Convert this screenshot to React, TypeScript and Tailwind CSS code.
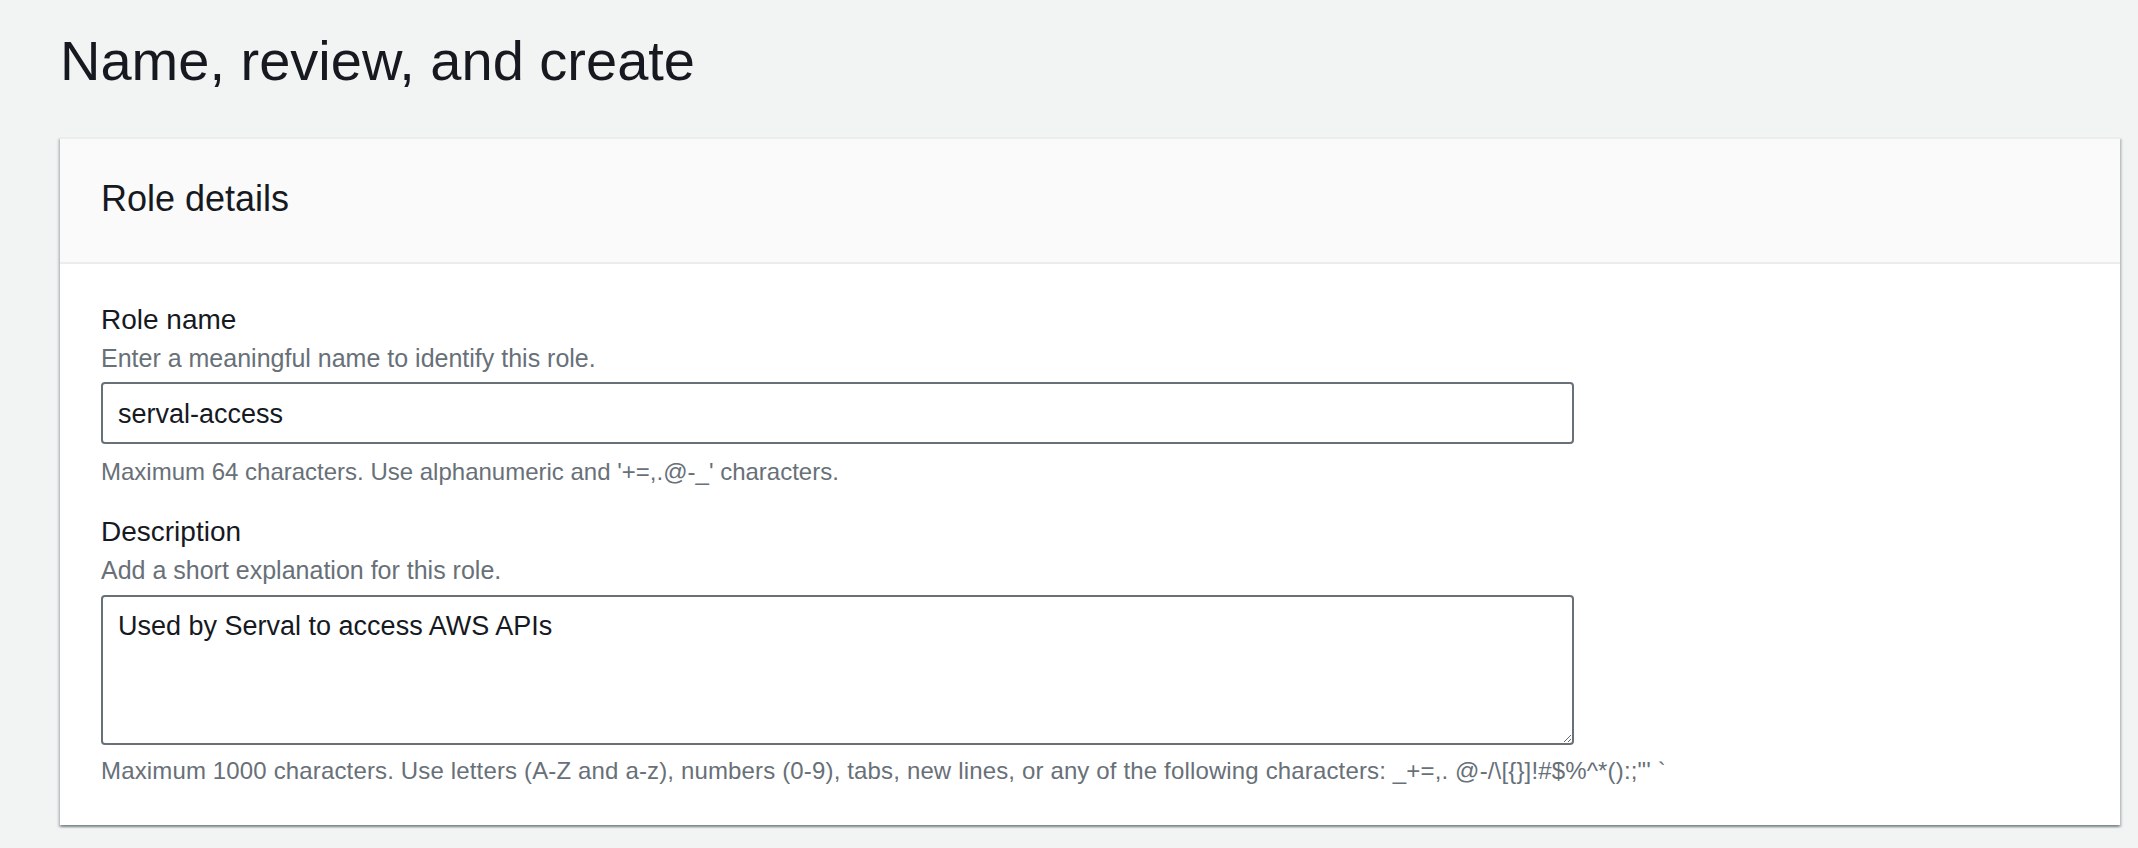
export default function App() {
  return (
    <div className="min-h-[848px] bg-[#f2f3f3] pl-[60px] pr-[18px] pt-[25px] pb-[22px] font-['Liberation_Sans',Arial,sans-serif] text-[#16191f]">
      <h1 className="text-[56px] leading-[72px] font-normal">Name, review, and create</h1>

      <div className="mt-[40px] bg-white border-t-2 border-[#eaeded] shadow-[0_2px_2px_0_rgba(0,28,36,0.3),2px_2px_2px_0_rgba(0,28,36,0.15),-2px_2px_2px_0_rgba(0,28,36,0.15)]">
        {/* Header */}
        <div className="bg-[#fafafa] border-b-2 border-[#eaeded] px-[41px] pt-[36px] pb-[39px]">
          <h2 className="text-[36px] leading-[48px] font-normal">Role details</h2>
        </div>

        {/* Body */}
        <div className="px-[41px] pt-[36px] pb-[38px]">
          <div>
            <label className="block text-[28px] leading-[40px]">Role name</label>
            <p className="text-[25px] leading-[36px] text-[#687078]">Enter a meaningful name to identify this role.</p>
            <input
              type="text"
              defaultValue="serval-access"
              className="mt-[6px] block w-[1473px] h-[62px] rounded-[4px] border-2 border-[#687078] bg-white px-[15px] pt-[10px] pb-[8px] text-[27px] leading-[40px] text-[#16191f] outline-none"
            />
            <p className="mt-[12px] text-[24px] leading-[32px] text-[#687078]">
              Maximum 64 characters. Use alphanumeric and '+=,.@-_' characters.
            </p>
          </div>

          <div className="mt-[24px]">
            <label className="block text-[28px] leading-[40px]">Description</label>
            <p className="text-[25px] leading-[36px] text-[#687078]">Add a short explanation for this role.</p>
            <textarea
              defaultValue="Used by Serval to access AWS APIs"
              className="mt-[7px] block w-[1473px] h-[150px] rounded-[4px] border-2 border-[#687078] bg-white px-[15px] pt-[9px] pb-[8px] text-[27px] leading-[40px] text-[#16191f] outline-none"
            />
            <p className="mt-[10px] text-[24px] leading-[32px] tracking-[0.15px] text-[#687078]">
              Maximum 1000 characters. Use letters (A-Z and a-z), numbers (0-9), tabs, new lines, or any of the following characters: _+=,. @-/\[{'{'}{'}'}]!#$%^*():;"' `
            </p>
          </div>
        </div>
      </div>
    </div>
  );
}
